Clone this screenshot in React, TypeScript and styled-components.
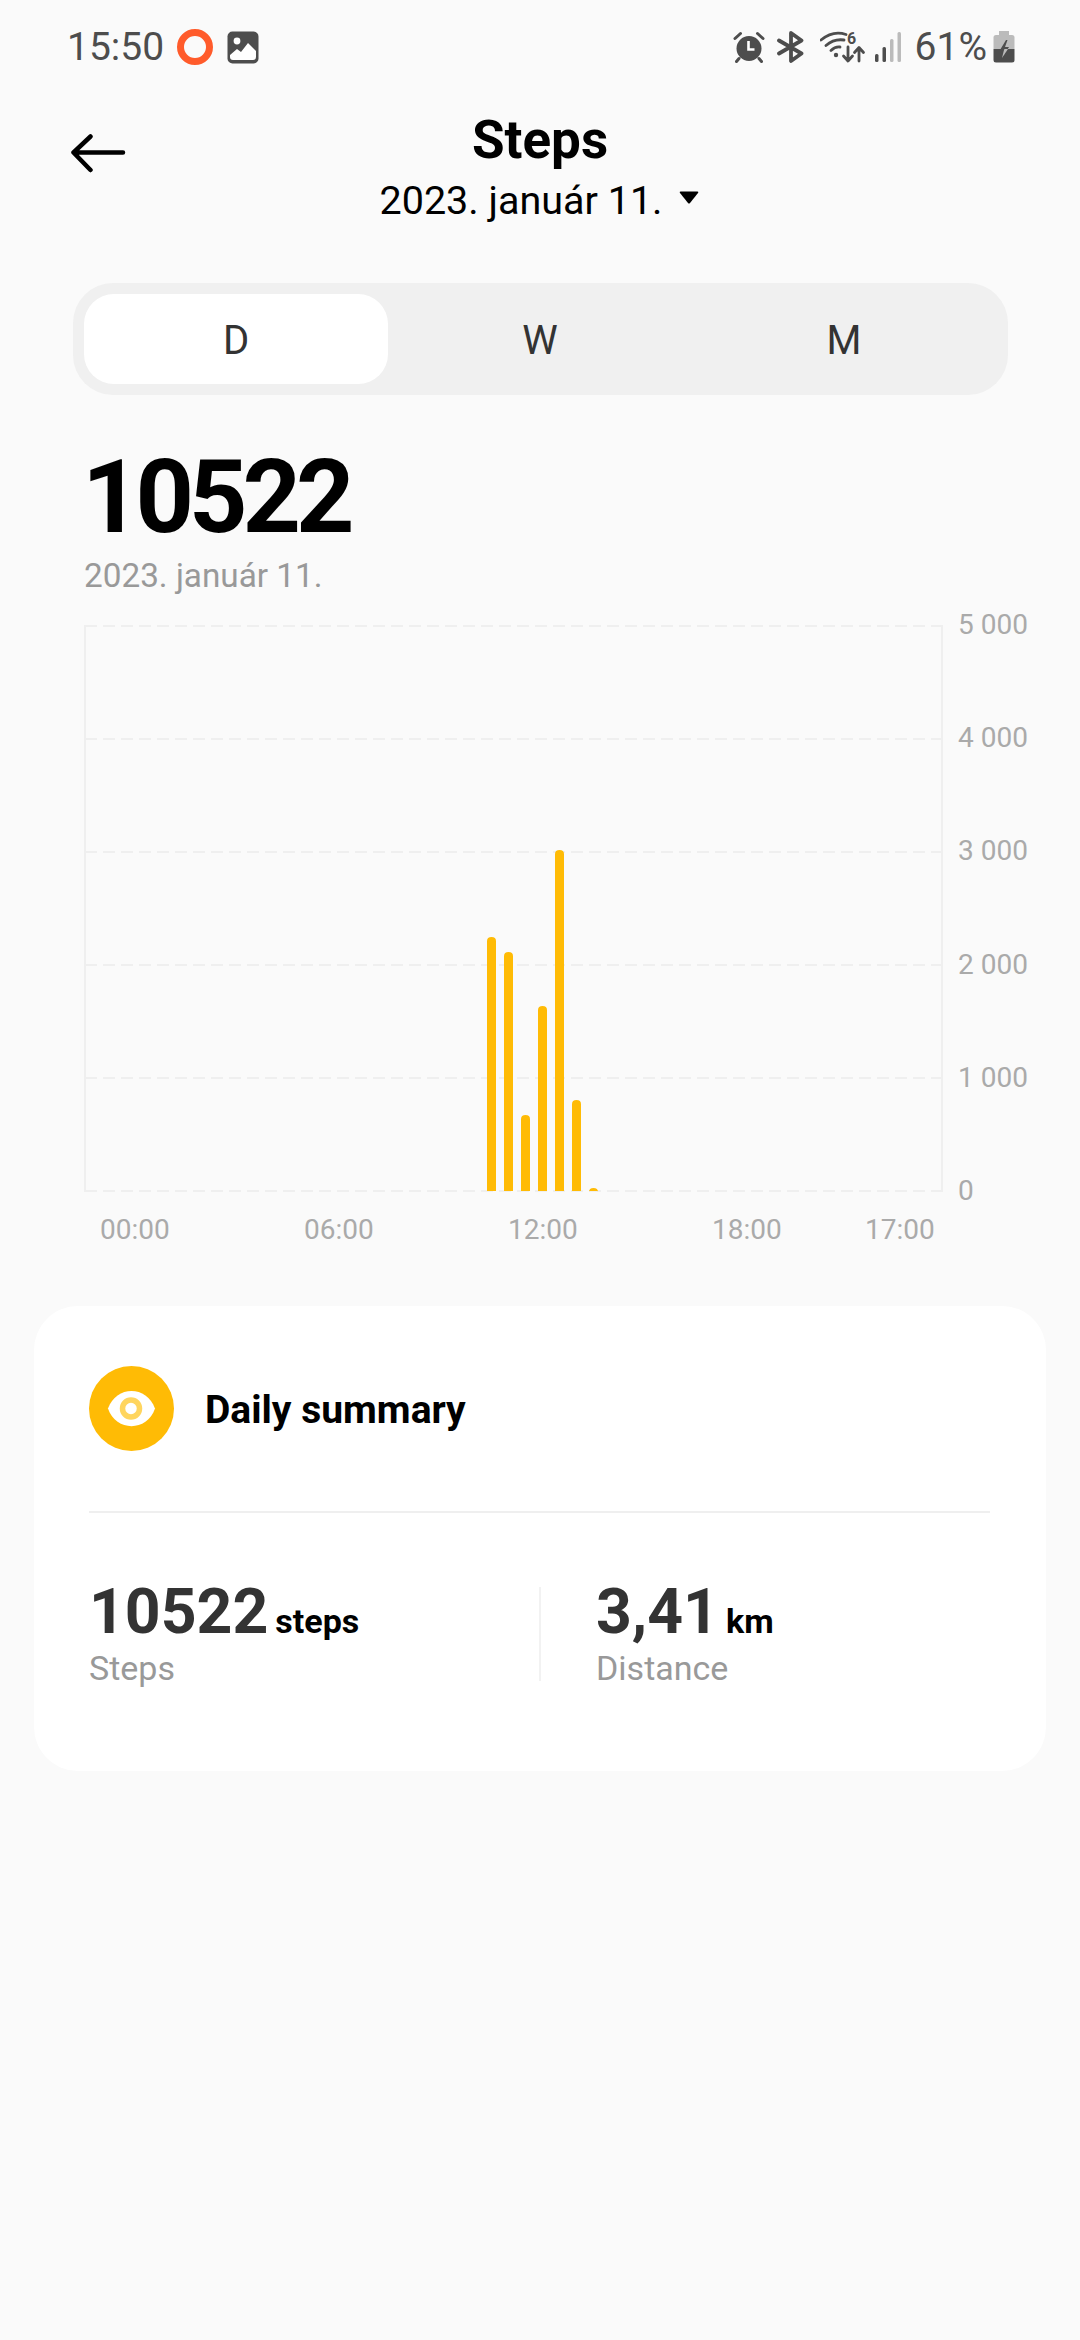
import React from "react";
import styled, {createGlobalStyle} from "styled-components";

const GlobalStyle = createGlobalStyle`
  html, body {
    margin: 0;
    padding: 0;
    background: #fafafa;
  }
  * {
    box-sizing: border-box;
  }
`

const Page = styled.div`
  width: 1080px;
  min-height: 2340px;
  background: #fafafa;
  font-family: Roboto, "Liberation Sans", sans-serif;
  color: #000;
  overflow: hidden;
`

const StatusBar = styled.div`
  height: 94px;
  padding: 26px 65px 0 67px;
  display: flex;
  justify-content: space-between;
  align-items: flex-start;
  color: #4d4d4d;
  font-size: 39px;
  line-height: 42px;
`

const StatusGroup = styled.div`
  display: flex;
  align-items: center;
  height: 42px;
`

const StatusIcon = styled.svg<{ $left: number, $top?: number }>`
  display: block;
  flex: none;
  margin-left: ${props => props.$left}px;
  margin-top: ${props => props.$top || 0}px;
`

const StatusText = styled.span<{ $left?: number }>`
  margin-left: ${props => props.$left || 0}px;
`

const Header = styled.div`
  height: 189px;
  padding-top: 16px;
  position: relative;
  text-align: center;
`

const BackIcon = styled.svg`
  position: absolute;
  left: 70px;
  top: 40px;
`

const Title = styled.div`
  font-size: 53px;
  line-height: 60px;
  font-weight: 700;
`

const DateRow = styled.div`
  display: flex;
  justify-content: center;
  align-items: center;
  padding-right: 2px;
  font-size: 39.5px;
  line-height: 50px;
  margin-top: 6px;
`

const Caret = styled.svg`
  margin-left: 16px;
  margin-bottom: 8px;
`

const Tabs = styled.div`
  margin: 0 72px 0 73px;
  height: 112px;
  padding: 11px 12px 11px 11px;
  border-radius: 40px;
  background: #f0f0f0;
  display: grid;
  grid-template-columns: repeat(3, 1fr);
`

const Tab = styled.div<{ $active?: boolean }>`
  display: flex;
  align-items: center;
  justify-content: center;
  padding-top: 3px;
  border-radius: 30px;
  font-size: 40px;
  color: #333;
  background: ${props => props.$active ? "#fff" : "transparent"};
`

const Total = styled.div`
  margin: 42px 0 0 82px;
  font-size: 102px;
  line-height: 120px;
  font-weight: 700;
  letter-spacing: -5px;
`

const TotalDate = styled.div`
  margin: -1px 0 0 84px;
  font-size: 33.3px;
  line-height: 40px;
  color: #999;
`

const ChartRow = styled.div`
  display: flex;
  margin: 29px 0 0 84px;
`

const Plot = styled.svg`
  display: block;
  flex: none;
`

const YAxis = styled.div`
  height: 598px;
  margin: -16px 0 0 14px;
  display: flex;
  flex-direction: column;
  justify-content: space-between;
  font-size: 28px;
  line-height: 32px;
  color: #aaa;
`

const XAxis = styled.div`
  display: grid;
  grid-template-columns: 204px 204px 204px 153px auto;
  padding: 3px 0 0 100px;
  font-size: 28px;
  line-height: 40px;
  color: #aaa;
`

const Card = styled.div`
  margin: 56px 34px 0;
  height: 465px;
  padding: 60px 56px 0 55px;
  border-radius: 44px;
  background: #fff;
`

const CardHead = styled.div`
  display: flex;
  align-items: center;
  height: 84px;
  gap: 31px;
`

const CardTitle = styled.div`
  padding-top: 4px;
  font-size: 39px;
  font-weight: 700;
`

const Divider = styled.div`
  height: 2px;
  margin-top: 61px;
  background: #efefef;
`

const Stats = styled.div`
  display: grid;
  grid-template-columns: 450px 1fr;
  padding-top: 74px;
`

const Stat = styled.div<{ $split?: boolean }>`
  padding-left: ${props => props.$split ? "55px" : "0"};
  border-left: ${props => props.$split ? "2px solid #f2f2f2" : "none"};
  height: 94px;
`

const StatValue = styled.div`
  font-size: 62.5px;
  line-height: 50px;
  font-weight: 700;
  color: #333;
  white-space: nowrap;
`

const StatUnit = styled.span`
  margin-left: 7px;
  font-size: 34px;
  color: #000;
`

const StatLabel = styled.div`
  margin-top: 2px;
  font-size: 34px;
  line-height: 40px;
  color: #999;
`

const bars = [
    {x: 403, top: 312},
    {x: 420, top: 327},
    {x: 437, top: 490},
    {x: 454, top: 381},
    {x: 471, top: 225},
    {x: 488, top: 475},
    {x: 505, top: 563},
]

const gridLines = [1, 114, 227, 340, 453, 566]
const yLabels = ["5 000", "4 000", "3 000", "2 000", "1 000", "0"]
const xLabels = ["00:00", "06:00", "12:00", "18:00", "17:00"]

function App() {
    return (
        <Page>
            <GlobalStyle/>
            <StatusBar>
                <StatusGroup>
                    <span>15:50</span>
                    <StatusIcon $left={12} width="38" height="38" viewBox="0 0 38 38">
                        <circle cx="19" cy="19" r="14.5" fill="none" stroke="#ff5b2b" strokeWidth="7"/>
                    </StatusIcon>
                    <StatusIcon $left={13} width="32" height="33" viewBox="0 0 32 33">
                        <rect width="31" height="32" x="0.5" y="0.5" rx="5" fill="#4d4d4d"/>
                        <circle cx="10" cy="10" r="3.4" fill="#fff"/>
                        <path d="M3 26 L3 24 L10 18 L14 21 L21 12 L29 20 L29 26 Q29 29 26 29 L6 29 Q3 29 3 26 Z" fill="#fff"/>
                    </StatusIcon>
                </StatusGroup>
                <StatusGroup>
                    <StatusIcon $left={0} width="32" height="32" viewBox="0 0 32 32">
                        <circle cx="16" cy="17.5" r="12.5" fill="#4d4d4d"/>
                        <path d="M15.5 10 V18.5 H21.5" fill="none" stroke="#fff" strokeWidth="2.6"/>
                        <path d="M2 7.5 L7.5 2.5 M30 7.5 L24.5 2.5 M6 27.5 L3.5 30.5 M26 27.5 L28.5 30.5" stroke="#4d4d4d" strokeWidth="3" strokeLinecap="round"/>
                    </StatusIcon>
                    <StatusIcon $left={12} width="28" height="32" viewBox="0 0 28 32">
                        <path d="M2 9.5 L24.500 22.5 L14 30 V2 L24.500 9.5 L2 22.5" fill="none" stroke="#4d4d4d" strokeWidth="3.8" strokeLinejoin="round" strokeLinecap="round"/>
                    </StatusIcon>
                    <StatusIcon $left={15} $top={-4} width="46" height="37" viewBox="0 -4 46 37">
                        <path d="M1 9 Q13 -1 26 3.5 M6 14.5 Q14 7.5 24 9 M11 19.5 Q15 15.5 20 16" fill="none" stroke="#4d4d4d" strokeWidth="2.8" strokeLinecap="round"/>
                        <circle cx="16" cy="24" r="2.2" fill="#4d4d4d"/>
                        <text x="27" y="13" fontFamily="Roboto, sans-serif" fontSize="16" fontWeight="700" fill="#4d4d4d">6</text>
                        <path d="M28 16 V29 M23.5 25 L28 30 L32.500 25 M39 30 V17 M34.500 21.500 L39 16.500 L43.500 21.500" fill="none" stroke="#4d4d4d" strokeWidth="2.800" strokeLinecap="round" strokeLinejoin="round"/>
                    </StatusIcon>
                    <StatusIcon $left={8} width="28" height="30" viewBox="0 0 28 30">
                        <rect x="1" y="22" width="3.500" height="8" rx="1.500" fill="#4d4d4d"/>
                        <rect x="8.500" y="15" width="3.500" height="15" rx="1.500" fill="#4d4d4d"/>
                        <rect x="16" y="7" width="3.500" height="23" rx="1.500" fill="#bbb"/>
                        <rect x="23.500" y="0" width="3.500" height="30" rx="1.500" fill="#bbb"/>
                    </StatusIcon>
                    <StatusText $left={13}>61%</StatusText>
                    <StatusIcon $left={6} width="22" height="32" viewBox="0 0 22 32">
                        <path d="M6 0 H16 V4 H19 Q21.500 4 21.500 6.500 V18 H0.500 V6.500 Q0.500 4 3 4 H6 Z" fill="#bbb"/>
                        <path d="M0.500 18 H21.500 V29 Q21.500 31.500 19 31.500 H3 Q0.500 31.500 0.500 29 Z" fill="#4d4d4d"/>
                        <path d="M13 9 L7 19 H11 L9 27 L16 16 H12 L14.500 9 Z" fill="#4d4d4d"/>
                        <path d="M11.500 18 L11 19 L9 27 L15 18 Z" fill="#bbb"/>
                    </StatusIcon>
                </StatusGroup>
            </StatusBar>
            <Header>
                <BackIcon width="56" height="40" viewBox="0 0 56 40">
                    <path d="M53 18.500 H4 M20.500 2.500 L3.500 18.500 L20.500 36" fill="none" stroke="#000" strokeWidth="4.500" strokeLinecap="round" strokeLinejoin="round"/>
                </BackIcon>
                <Title>Steps</Title>
                <DateRow>
                    <span>2023. január 11.</span>
                    <Caret width="20" height="13" viewBox="0 0 20 13">
                        <path d="M1.500 0.500 H18.500 Q20 0.500 19 2 L11 12 Q10 13 9 12 L1 2 Q0 0.500 1.500 0.500 Z" fill="#000"/>
                    </Caret>
                </DateRow>
            </Header>
            <Tabs>
                <Tab $active>D</Tab>
                <Tab>W</Tab>
                <Tab>M</Tab>
            </Tabs>
            <Total>10522</Total>
            <TotalDate>2023. január 11.</TotalDate>
            <ChartRow>
                <Plot width="860" height="568" viewBox="0 0 860 568">
                    {gridLines.map(y =>
                        <line key={y} x1="1" x2="858" y1={y} y2={y} stroke="#efefef" strokeWidth="2" strokeDasharray="12 6"/>
                    )}
                    <line x1="1" x2="1" y1="0" y2="567" stroke="#efefef" strokeWidth="2"/>
                    <line x1="858" x2="858" y1="0" y2="567" stroke="#efefef" strokeWidth="2"/>
                    {bars.map(bar =>
                        <path
                            key={bar.x}
                            d={`M${bar.x} 566 V${bar.top + 4} Q${bar.x} ${bar.top} ${bar.x + 4.5} ${bar.top} Q${bar.x + 9} ${bar.top} ${bar.x + 9} ${bar.top + 4} V566 Z`}
                            fill="#ffbb05"
                        />
                    )}
                </Plot>
                <YAxis>
                    {yLabels.map(label => <span key={label}>{label}</span>)}
                </YAxis>
            </ChartRow>
            <XAxis>
                {xLabels.map(label => <span key={label}>{label}</span>)}
            </XAxis>
            <Card>
                <CardHead>
                    <svg width="85" height="85" viewBox="0 0 85 85">
                        <circle cx="42.500" cy="42.500" r="42.500" fill="#ffbb05"/>
                        <path d="M19 42.500 C27 19 58 19 66 42.500 C58 66 27 66 19 42.500 Z" fill="#fff"/>
                        <circle cx="42" cy="42.500" r="8.500" fill="none" stroke="#ffd55e" strokeWidth="5.500"/>
                    </svg>
                    <CardTitle>Daily summary</CardTitle>
                </CardHead>
                <Divider/>
                <Stats>
                    <Stat>
                        <StatValue>10522<StatUnit>steps</StatUnit></StatValue>
                        <StatLabel>Steps</StatLabel>
                    </Stat>
                    <Stat $split>
                        <StatValue>3,41<StatUnit>km</StatUnit></StatValue>
                        <StatLabel>Distance</StatLabel>
                    </Stat>
                </Stats>
            </Card>
        </Page>
    );
}

export default App;
